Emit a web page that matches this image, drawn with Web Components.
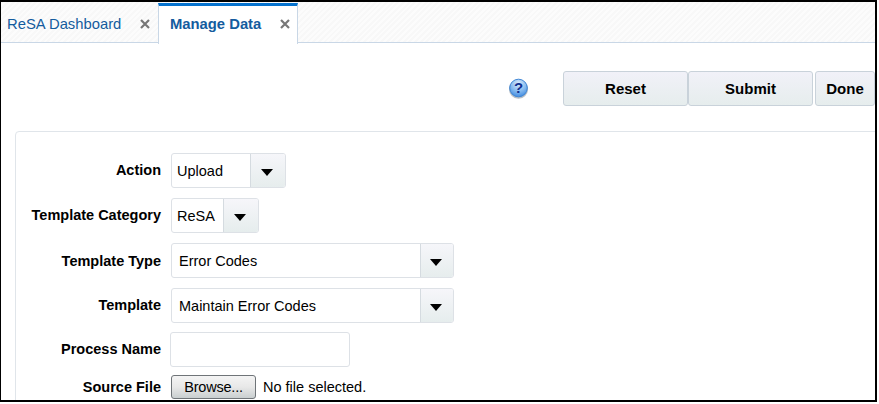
<!DOCTYPE html>
<html>
<head>
<meta charset="utf-8">
<title>Manage Data</title>
<style>
    html, body { margin: 0; padding: 0; background: #fff; }
    body { font-family: "Liberation Sans", Arial, sans-serif; font-size: 14.5px; color: #000; }
</style>
</head>
<body>
<app-frame>
    <tab-bar>
        <tab-item label="ReSA Dashboard" width="157"></tab-item>
        <tab-item label="Manage Data" width="140" active></tab-item>
    </tab-bar>
    <page-toolbar>
        <help-icon></help-icon>
        <flat-button width="125" style="margin-left:34px">Reset</flat-button>
        <flat-button width="125">Submit</flat-button>
        <flat-button width="60" style="margin-left:2px">Done</flat-button>
    </page-toolbar>
    <form-panel>
        <form-field label="Action" style="height:35px"><combo-box width="115" arrow="35" pad="6">Upload</combo-box></form-field>
        <form-field label="Template Category" style="height:35px;margin-top:10px"><combo-box width="88" arrow="35" pad="6">ReSA</combo-box></form-field>
        <form-field label="Template Type" style="height:35px;margin-top:10px;--label-pad:0"><combo-box width="283" arrow="33" pad="8">Error Codes</combo-box></form-field>
        <form-field label="Template" style="height:35px;margin-top:10px"><combo-box width="283" arrow="33" pad="8">Maintain Error Codes</combo-box></form-field>
        <form-field label="Process Name" style="height:35px;margin-top:9px"><text-box width="180"></text-box></form-field>
        <form-field label="Source File" style="height:24px;margin-top:8px;--label-pad:0"><file-picker></file-picker></form-field>
    </form-panel>
</app-frame>
<script>
    class AppFrame extends HTMLElement {
        constructor() {
            super();
            this.attachShadow({mode: "open"});
            this.shadowRoot.innerHTML = `
                <style>
                    :host {
                        display: block;
                        box-sizing: border-box;
                        width: 877px;
                        height: 402px;
                        border: solid #000;
                        border-width: 2px 2px 2px 1px;
                        overflow: hidden;
                        background: #fff;
                    }
                </style>
                <slot></slot>
            `;
        }
    }

    class TabBar extends HTMLElement {
        constructor() {
            super();
            this.attachShadow({mode: "open"});
            this.shadowRoot.innerHTML = `
                <style>
                    :host {
                        display: flex;
                        box-sizing: border-box;
                        height: 41px;
                        border-bottom: 1px solid #c9d7e6;
                        background: repeating-linear-gradient(135deg, #f8f8f8 0 2px, #fcfcfc 2px 4px);
                    }
                </style>
                <slot></slot>
            `;
        }
    }

    class TabItem extends HTMLElement {
        constructor() {
            super();
            this.attachShadow({mode: "open"});
            const active = this.hasAttribute('active');
            this.shadowRoot.innerHTML = `
                <style>
                    :host {
                        display: flex;
                        box-sizing: border-box;
                        align-items: center;
                        height: 41px;
                        padding-left: ${active ? 11 : 6}px;
                        width: ${this.getAttribute('width')}px;
                        color: #145c9e;
                        font-size: 14.8px;
                        ${active ? `
                        background: #fff;
                        border-top: 3px solid #0572ce;
                        border-left: 1px solid #c9d7e6;
                        border-right: 1px solid #c9d7e6;
                        margin-top: 1px;
                        padding-bottom: 2px;
                        font-weight: bold;
                        ` : 'padding-top: 3px;'}
                    }
                    span { flex: 1; white-space: nowrap; }
                    svg { margin-right: ${active ? 7 : 8}px; }
                </style>
                <span>${this.getAttribute('label')}</span>
                <svg width="10" height="10" viewBox="0 0 10 10"><path d="M1 1 9 9M9 1 1 9" stroke="#777" stroke-width="2.2" fill="none"/></svg>
            `;
        }
    }

    class PageToolbar extends HTMLElement {
        constructor() {
            super();
            this.attachShadow({mode: "open"});
            this.shadowRoot.innerHTML = `
                <style>
                    :host {
                        display: flex;
                        align-items: center;
                        height: 35px;
                        padding: 28px 0 0 507px;
                    }
                </style>
                <slot></slot>
            `;
        }
    }

    class HelpIcon extends HTMLElement {
        constructor() {
            super();
            this.attachShadow({mode: "open"});
            this.shadowRoot.innerHTML = `
                <style>
                    :host { display: block; width: 21px; height: 21px; }
                    svg { display: block; }
                    text { font: bold 15px "Liberation Sans", Arial, sans-serif; fill: #0f2f8f; }
                </style>
                <svg width="21" height="21" viewBox="0 0 21 21">
                    <defs>
                        <radialGradient id="ball" cx=".5" cy=".25" r=".85">
                            <stop offset="0" stop-color="#dcecfb"/>
                            <stop offset=".55" stop-color="#7fb6ee"/>
                            <stop offset="1" stop-color="#2f7fdc"/>
                        </radialGradient>
                    </defs>
                    <circle cx="10.5" cy="11.2" r="9.5" fill="#6d7d8c" opacity=".5"/>
                    <circle cx="10.5" cy="10" r="8.8" fill="url(#ball)" stroke="#3f86d6"/>
                    <text x="10.5" y="15.2" text-anchor="middle">?</text>
                </svg>
            `;
        }
    }

    class FlatButton extends HTMLElement {
        constructor() {
            super();
            this.attachShadow({mode: "open"});
            this.shadowRoot.innerHTML = `
                <style>
                    :host {
                        display: flex;
                        box-sizing: border-box;
                        align-items: center;
                        justify-content: center;
                        width: ${this.getAttribute('width')}px;
                        height: 35px;
                        border: 1px solid #c9d2da;
                        border-radius: 3px;
                        background: linear-gradient(#f1f1f8, #e6eded);
                        font-weight: bold;
                        font-size: 15px;
                        color: #000;
                    }
                </style>
                <slot></slot>
            `;
        }
    }

    class FormPanel extends HTMLElement {
        constructor() {
            super();
            this.attachShadow({mode: "open"});
            this.shadowRoot.innerHTML = `
                <style>
                    :host {
                        display: block;
                        box-sizing: border-box;
                        width: 900px;
                        height: 300px;
                        margin: 25px 0 0 14px;
                        padding: 21px 0 0 0;
                        border: 1px solid #e0e5ea;
                        border-radius: 4px;
                    }
                </style>
                <slot></slot>
            `;
        }
    }

    class FormField extends HTMLElement {
        constructor() {
            super();
            this.attachShadow({mode: "open"});
            this.shadowRoot.innerHTML = `
                <style>
                    :host {
                        display: grid;
                        grid-template-columns: 145px auto;
                        column-gap: 10px;
                        align-items: center;
                        justify-content: start;
                    }
                    label { text-align: right; font-weight: bold; white-space: nowrap; padding-bottom: var(--label-pad, 2px); }
                </style>
                <label>${this.getAttribute('label')}</label>
                <div><slot></slot></div>
            `;
        }
    }

    class ComboBox extends HTMLElement {
        constructor() {
            super();
            this.attachShadow({mode: "open"});
            this.shadowRoot.innerHTML = `
                <style>
                    :host {
                        display: flex;
                        box-sizing: border-box;
                        width: ${this.getAttribute('width')}px;
                        height: 35px;
                        border: 1px solid #dde1e6;
                        border-radius: 3px;
                        overflow: hidden;
                    }
                    .value { flex: 1; display: flex; align-items: center; padding-left: ${this.getAttribute('pad') - 1}px; white-space: nowrap; }
                    .arrow {
                        display: flex;
                        align-items: center;
                        justify-content: center;
                        box-sizing: border-box;
                        width: ${this.getAttribute('arrow')}px;
                        padding-right: 2px;
                        border-left: 1px solid #d5dbe0;
                        background: linear-gradient(#f6f6fa, #e6eded);
                    }
                    svg { display: block; margin-top: 3px; }
                </style>
                <div class="value"><slot></slot></div>
                <div class="arrow"><svg width="12" height="7" viewBox="0 0 12 7"><path d="M0 0H12L6 7Z" fill="#000"/></svg></div>
            `;
        }
    }

    class TextBox extends HTMLElement {
        constructor() {
            super();
            this.attachShadow({mode: "open"});
            this.shadowRoot.innerHTML = `
                <style>
                    :host {
                        display: block;
                        box-sizing: border-box;
                        width: ${this.getAttribute('width')}px;
                        height: 35px;
                        margin-left: -1px;
                        border: 1px solid #dde1e6;
                        border-radius: 3px;
                    }
                </style>
            `;
        }
    }

    class FilePicker extends HTMLElement {
        constructor() {
            super();
            this.attachShadow({mode: "open"});
            this.shadowRoot.innerHTML = `
                <style>
                    :host { display: flex; align-items: center; gap: 7px; white-space: nowrap; }
                    .browse {
                        display: flex;
                        box-sizing: border-box;
                        align-items: center;
                        justify-content: center;
                        width: 85px;
                        height: 24px;
                        border: 1px solid #6f7478;
                        border-radius: 3px;
                        letter-spacing: -.2px;
                        background: linear-gradient(#f4f4f4 0, #e8e8e8 50%, #c9cfd0 100%);
                    }
                </style>
                <div class="browse">Browse...</div>
                <span>No file selected.</span>
            `;
        }
    }

    customElements.define('app-frame', AppFrame);
    customElements.define('tab-bar', TabBar);
    customElements.define('tab-item', TabItem);
    customElements.define('page-toolbar', PageToolbar);
    customElements.define('help-icon', HelpIcon);
    customElements.define('flat-button', FlatButton);
    customElements.define('form-panel', FormPanel);
    customElements.define('form-field', FormField);
    customElements.define('combo-box', ComboBox);
    customElements.define('text-box', TextBox);
    customElements.define('file-picker', FilePicker);
</script>
</body>
</html>
